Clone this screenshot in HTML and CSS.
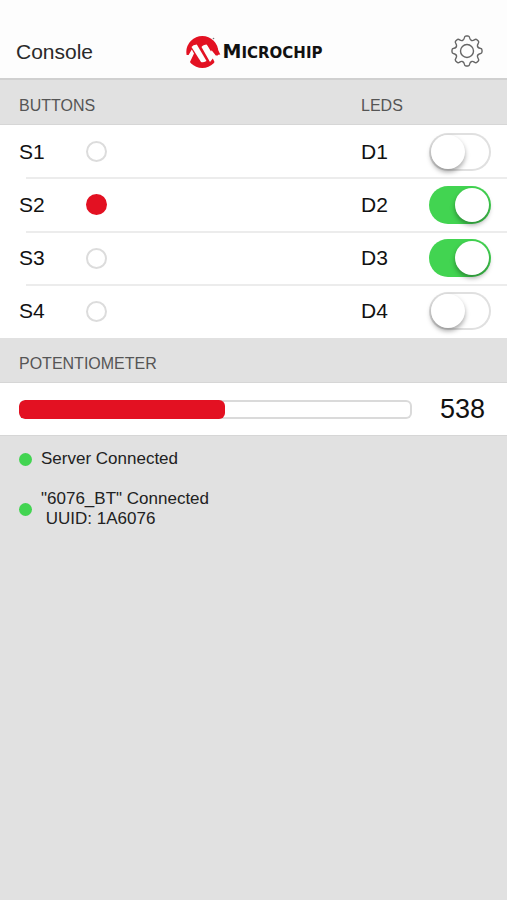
FILE: index.html
```html
<!DOCTYPE html>
<html lang="en">
<head>
    <meta charset="UTF-8">
    <meta name="viewport" content="width=device-width, initial-scale=1.0">
    <title>Microchip Console</title>
    <link rel="stylesheet" href="styles.css">
</head>
<body>
    <header class="navbar">
        <h1 class="title">Console</h1>
        <div class="logo">
            <svg class="logo-mark" viewBox="0 0 36 34" aria-hidden="true">
                <circle cx="17.3" cy="17" r="16" fill="#e31122"/>
                <path fill="#e31122" d="M24 4 L29 7 L35.300 19.500 H31 Z"/>
                <path fill="#fdfdfd" d="M0 20 H3.600 L6.800 14.500 L9 18.500 L4.500 28 H0 Z"/>
                <path fill="#fdfdfd" d="M6.500 12 Q8 9.500 11.800 9.500 L21.500 26 Q18 28 16 27 Z"/>
                <path fill="#fdfdfd" d="M16.500 12 Q18 9.500 22 9.500 L30.800 20.500 H36 V28 H30 L27.800 23.500 L25 27 Z"/>
                <path fill="#e31122" d="M21.500 9 L25.500 7 L34.500 19.500 H31 L27.500 14 L26 16.500 Z"/>
                <circle cx="28.5" cy="3.5" r="0.8" fill="#777"/>
            </svg>
            <span class="logo-text"><span class="logo-initial">M</span>ICROCHIP</span>
        </div>
        <button class="settings-btn" type="button" aria-label="Settings">
            <svg class="gear" viewBox="0 0 32 32" aria-hidden="true">
                <defs>
                    <path id="tooth" d="M11.600 5.400 Q13 4.800 13.300 3 Q13.600 1 15 1 H17 Q18.400 1 18.700 3 Q19 4.800 20.400 5.400"/>
                </defs>
                <use href="#tooth"/>
                <use href="#tooth" transform="rotate(45 16 16)"/>
                <use href="#tooth" transform="rotate(90 16 16)"/>
                <use href="#tooth" transform="rotate(135 16 16)"/>
                <use href="#tooth" transform="rotate(180 16 16)"/>
                <use href="#tooth" transform="rotate(225 16 16)"/>
                <use href="#tooth" transform="rotate(270 16 16)"/>
                <use href="#tooth" transform="rotate(315 16 16)"/>
                <circle cx="16" cy="16" r="6.5"/>
            </svg>
        </button>
    </header>

    <main>
        <!-- Buttons & LEDs -->
        <div class="section-header io-grid">
            <h2>BUTTONS</h2>
            <h2>LEDS</h2>
        </div>
        <ul class="rows">
            <li class="row io-grid">
                <span>S1</span>
                <span class="indicator" role="img" aria-label="S1 released"></span>
                <label for="led1">D1</label>
                <input class="switch" type="checkbox" id="led1">
            </li>
            <li class="row io-grid">
                <span>S2</span>
                <span class="indicator pressed" role="img" aria-label="S2 pressed"></span>
                <label for="led2">D2</label>
                <input class="switch" type="checkbox" id="led2" checked>
            </li>
            <li class="row io-grid">
                <span>S3</span>
                <span class="indicator" role="img" aria-label="S3 released"></span>
                <label for="led3">D3</label>
                <input class="switch" type="checkbox" id="led3" checked>
            </li>
            <li class="row io-grid">
                <span>S4</span>
                <span class="indicator" role="img" aria-label="S4 released"></span>
                <label for="led4">D4</label>
                <input class="switch" type="checkbox" id="led4">
            </li>
        </ul>

        <!-- Potentiometer -->
        <div class="section-header">
            <h2 id="potLabel">POTENTIOMETER</h2>
        </div>
        <div class="pot">
            <progress class="pot-bar" value="538" max="1024" aria-labelledby="potLabel"></progress>
            <span class="pot-value">538</span>
        </div>

        <!-- Connection status -->
        <ul class="status-list">
            <li class="status">
                <span class="dot"></span>
                <p>Server Connected</p>
            </li>
            <li class="status">
                <span class="dot"></span>
                <p>"6076_BT" Connected<br>&nbsp;UUID: 1A6076</p>
            </li>
        </ul>
    </main>
</body>
</html>
```
FILE: styles.css
```css
* {
    margin: 0;
    padding: 0;
    box-sizing: border-box;
}

body {
    font-family: "Liberation Sans", Arial, sans-serif;
    background: #e1e1e1;
    color: #111;
}

ul {
    list-style: none;
}

/* Navbar */
.navbar {
    display: grid;
    grid-template-columns: 1fr auto 1fr;
    align-items: center;
    padding: 35px 16px 9px;
    background: #fdfdfd;
    border-bottom: 2px solid #d0d0d0;
}

.title {
    font-size: 21px;
    font-weight: 400;
    line-height: 34px;
    color: #2a2a2a;
}

.logo {
    display: flex;
    align-items: center;
    gap: 2px;
}

.logo-mark {
    width: 36px;
    height: 34px;
}

.logo-text {
    font-family: "DejaVu Sans", sans-serif;
    font-size: 15px;
    font-weight: 700;
    line-height: 28px;
}

.logo-initial {
    font-size: 19px;
}

.settings-btn {
    justify-self: end;
    align-self: start;
    display: flex;
    margin-right: 8px;
    border: none;
    background: none;
    cursor: pointer;
}

.gear {
    width: 32px;
    height: 32px;
    fill: none;
    stroke: #666;
    stroke-width: 1.4;
    stroke-linecap: round;
}

/* Sections */
.section-header {
    padding: 15px 16px 7px 19px;
    border-bottom: 1px solid #d6d6d6;
}

.section-header h2 {
    font-size: 16px;
    font-weight: 400;
    line-height: 22px;
    color: #555;
}

.io-grid {
    display: grid;
    grid-template-columns: 67px 1fr 68px 62px;
    align-items: center;
}

.section-header.io-grid {
    grid-template-columns: 1fr 130px;
}

.rows {
    display: grid;
    grid-auto-rows: 1fr;
    min-height: 213px;
    background: #fff;
}

.row {
    position: relative;
    padding: 0 16px 0 19px;
    font-size: 21px;
}

.row + .row::before {
    content: '';
    position: absolute;
    top: -1px;
    left: 26px;
    right: 0;
    height: 2px;
    background: #ececec;
}

.indicator {
    width: 21px;
    height: 21px;
    border: 2px solid #dcdcdc;
    border-radius: 50%;
}

.indicator.pressed {
    background: #e31122;
    border-color: #e31122;
}

/* Switch */
.switch {
    appearance: none;
    display: flex;
    width: 62px;
    height: 38px;
    padding: 2px;
    border-radius: 19px;
    background: #fff;
    box-shadow: inset 0 0 0 2px #e0e0e0;
    cursor: pointer;
}

.switch::before {
    content: '';
    width: 34px;
    height: 34px;
    border-radius: 50%;
    background: #fff;
    box-shadow: 0 3px 5px rgba(0, 0, 0, 0.35);
}

.switch:checked {
    justify-content: flex-end;
    background: #42d451;
    box-shadow: none;
}

/* Potentiometer */
.pot {
    display: flex;
    align-items: center;
    gap: 28px;
    height: 53px;
    padding: 0 22px 0 19px;
    background: #fff;
    border-bottom: 1px solid #d6d6d6;
}

.pot-bar {
    appearance: none;
    flex: 1;
    min-width: 0;
    height: 19px;
    border: none;
    border-radius: 6px;
    background: #fff;
    box-shadow: inset 0 0 0 2px #dadada;
    overflow: hidden;
}

.pot-bar::-webkit-progress-bar {
    background: transparent;
}

.pot-bar::-webkit-progress-value {
    background: #e31122;
    border-radius: 6px;
}

.pot-value {
    font-size: 27px;
}

/* Status */
.status-list {
    display: flex;
    flex-direction: column;
    gap: 20px;
    padding: 13px 19px;
}

.status {
    display: flex;
    align-items: center;
    gap: 9px;
    font-size: 17px;
    line-height: 20px;
    color: #222;
}

.dot {
    width: 13px;
    height: 13px;
    border-radius: 50%;
    background: #42d451;
}
```
